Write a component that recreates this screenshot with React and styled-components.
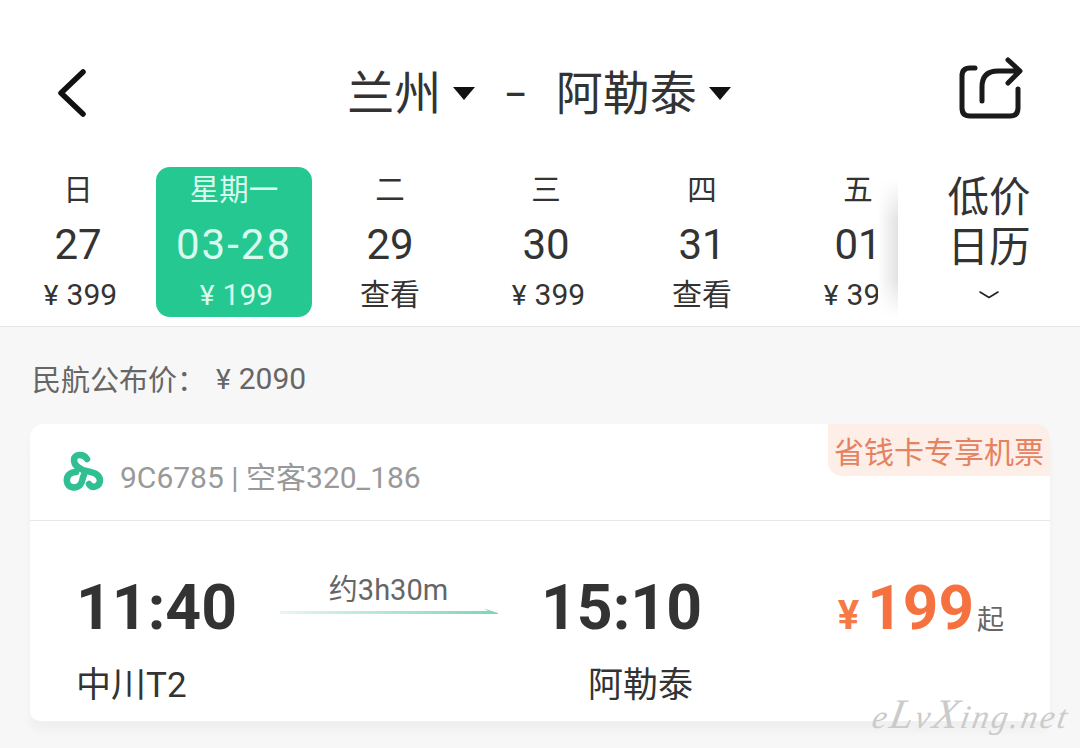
import React from 'react'
import styled, { createGlobalStyle } from 'styled-components'

const days = [
  { week: '日', date: '27', price: '399' },
  { week: '星期一', date: '03-28', price: '199', active: true },
  { week: '二', date: '29' },
  { week: '三', date: '30', price: '399' },
  { week: '四', date: '31' },
  { week: '五', date: '01', price: '399' },
]

export default function App() {
  return (
    <Page>
      <GlobalStyle />
      <Header>
        <TopBar>
          <IconButton>
            <svg width="34" height="50" viewBox="0 0 34 50" fill="none">
              <path d="M28 3 L6 24 L28 45" stroke="#111" strokeWidth="5.5" strokeLinecap="round" strokeLinejoin="round" />
            </svg>
          </IconButton>
          <Route>
            <City>兰州</City>
            <Caret />
            <Dash>–</Dash>
            <City>阿勒泰</City>
            <Caret />
          </Route>
          <ShareButton>
            <svg width="66" height="66" viewBox="0 0 66 66" fill="none">
              <path
                d="M18 12 H13 Q5 12 5 20 V52 Q5 60 13 60 H53 Q61 60 61 52 V33"
                stroke="#1a1a1a"
                strokeWidth="5"
                strokeLinecap="round"
              />
              <path
                d="M25 45 V31 Q25 15 41 15 H62 M51 4 L63 15 L51 27"
                stroke="#1a1a1a"
                strokeWidth="5"
                strokeLinecap="round"
                strokeLinejoin="round"
              />
            </svg>
          </ShareButton>
        </TopBar>
        <DateRow>
          <DateStrip>
            {days.map(day => (
              <DateCell key={day.date} $active={day.active}>
                <WeekLabel>{day.week}</WeekLabel>
                <DateNumber $active={day.active}>{day.date}</DateNumber>
                <DatePrice>
                  {day.price ? (
                    <>
                      <Yen>¥</Yen>
                      {day.price}
                    </>
                  ) : (
                    '查看'
                  )}
                </DatePrice>
              </DateCell>
            ))}
          </DateStrip>
          <StripFade />
          <CalendarLink>
            <CalendarText>
              低价
              <br />
              日历
            </CalendarText>
            <svg width="22" height="10" viewBox="0 0 22 10" fill="none">
              <path d="M2 2 L11 7.5 L20 2" stroke="#222" strokeWidth="1.6" strokeLinecap="round" strokeLinejoin="round" />
            </svg>
          </CalendarLink>
        </DateRow>
      </Header>
      <Content>
        <PublishedPrice>
          民航公布价：
          <PublishedValue>
            <Yen>¥</Yen>2090
          </PublishedValue>
        </PublishedPrice>
        <Card>
          <Badge>省钱卡专享机票</Badge>
          <CardHeader>
            <svg width="44" height="42" viewBox="0 0 44 42" fill="none" stroke="#2fbf93" strokeWidth="6.5" strokeLinecap="round">
              <path d="M25 8 C21 2 12 3 12 9 C12 15 17 17 21 19 C27 21 37 21 38 29 C38 36 30 38 27 33" />
              <path d="M14 21 C8 21 4 25 5 31 C6 37 14 38 18 34 C21 31 20 27 22 24" />
            </svg>
            <FlightInfo>9C6785 | 空客320_186</FlightInfo>
          </CardHeader>
          <CardBody>
            <Time>11:40</Time>
            <Duration>
              <DurationText>约3h30m</DurationText>
              <svg width="218" height="8" viewBox="0 0 218 8">
                <defs>
                  <linearGradient id="durationLine" x1="0" x2="1" y1="0" y2="0">
                    <stop offset="0" stopColor="#e6f6f0" />
                    <stop offset="1" stopColor="#7cd5b5" />
                  </linearGradient>
                </defs>
                <path d="M0 3 H208 L204 0.5 L218 5 V6 H0 Z" fill="url(#durationLine)" />
              </svg>
            </Duration>
            <Time $indent={44}>15:10</Time>
            <Price>
              <PriceYen>¥</PriceYen>
              <PriceValue>199</PriceValue>
              <PriceSuffix>起</PriceSuffix>
            </Price>
            <Airport>中川T2</Airport>
            <span />
            <Airport $indent={91}>阿勒泰</Airport>
          </CardBody>
        </Card>
      </Content>
      <Watermark>
        e<WatermarkCap>L</WatermarkCap>v<WatermarkCap>X</WatermarkCap>ing.net
      </Watermark>
    </Page>
  )
}

const GlobalStyle = createGlobalStyle`
  html, body {
    margin: 0;
    padding: 0;
    background: #f7f7f7;
  }
  * {
    box-sizing: border-box;
  }
`

const Page = styled.div`
  position: relative;
  width: 1080px;
  height: 748px;
  overflow: hidden;
  font-family: Roboto, "Noto Sans CJK SC", sans-serif;
  color: #333;
  background: #f7f7f7;
`

const Header = styled.header`
  height: 327px;
  background: #fff;
  border-bottom: 1px solid #e6e6e6;
`

const TopBar = styled.div`
  display: grid;
  grid-template-columns: 1fr auto 1fr;
  align-items: center;
  height: 167px;
  padding: 20px 57px 0 55px;
`

const IconButton = styled.div`
  display: flex;
  align-items: center;
`

const ShareButton = styled(IconButton)`
  justify-content: flex-end;
  margin-top: -10px;
`

const Route = styled.div`
  display: flex;
  align-items: center;
`

const City = styled.span`
  font-size: 47px;
  line-height: 60px;
  color: #333;
`

const Caret = styled.span`
  width: 0;
  height: 0;
  margin-left: 12px;
  border-left: 11px solid transparent;
  border-right: 11px solid transparent;
  border-top: 13px solid #111;
`

const Dash = styled.span`
  margin: 4px 29px 0;
  font-size: 35px;
  font-weight: 500;
  line-height: 60px;
  color: #333;
`

const DateRow = styled.div`
  display: flex;
  height: 150px;
`

const DateStrip = styled.div`
  display: flex;
  flex: none;
  width: 878px;
  overflow: hidden;
`

const DateCell = styled.div`
  display: flex;
  flex: none;
  flex-direction: column;
  align-items: center;
  width: 156px;
  height: 150px;
  border-radius: 14px;
  background: ${p => (p.$active ? '#25c891' : 'transparent')};
  color: ${p => (p.$active ? '#d9fbee' : '#333')};
`

const WeekLabel = styled.div`
  font-size: 29.5px;
  line-height: 46px;
`

const DateNumber = styled.div`
  font-size: 42px;
  line-height: 64px;
  letter-spacing: ${p => (p.$active ? '2px' : '0')};
`

const DatePrice = styled.div`
  font-size: 30px;
  line-height: 36px;
`

const Yen = styled.span`
  margin: 0 8px 0 5px;
  font-size: 28px;
`

const StripFade = styled.div`
  flex: none;
  width: 20px;
  background: linear-gradient(to right, #fff, #e2e2e2);
  mask-image: linear-gradient(to bottom, transparent 8%, #000 35%, #000 75%, transparent 100%);
`

const CalendarLink = styled.div`
  display: flex;
  flex: 1;
  flex-direction: column;
  align-items: center;
  padding-top: 6px;
  background: #fff;
`

const CalendarText = styled.div`
  margin-bottom: 17px;
  font-size: 41.5px;
  line-height: 50px;
  text-align: center;
  color: #333;
`

const Content = styled.main`
  padding: 0 30px;
`

const PublishedPrice = styled.div`
  display: flex;
  align-items: center;
  height: 97px;
  padding: 5px 2px 0;
  font-size: 29px;
  color: #666;
`

const PublishedValue = styled.span`
  margin-left: 5px;
  font-size: 30px;
`

const Card = styled.section`
  position: relative;
  height: 297px;
  border-radius: 14px 14px 10px 10px;
  background: #fff;
  box-shadow: 0 10px 10px rgba(0, 0, 0, 0.03);
`

const Badge = styled.div`
  position: absolute;
  top: 0;
  right: 0;
  width: 222px;
  height: 52px;
  padding-left: 6px;
  border-radius: 0 14px 0 14px;
  background: #fdeee8;
  font-size: 30px;
  line-height: 58px;
  white-space: nowrap;
  color: #e5825f;
`

const CardHeader = styled.div`
  display: flex;
  align-items: center;
  gap: 14px;
  height: 97px;
  padding-left: 32px;
  border-bottom: 1px solid #e8e8e8;
`

const FlightInfo = styled.span`
  margin-top: 6px;
  font-size: 30px;
  color: #999;
`

const CardBody = styled.div`
  display: grid;
  grid-template-columns: 204px 217px 248px 1fr;
  grid-template-rows: 72px 50px;
  row-gap: 17px;
  align-items: center;
  padding: 51px 46px 0;
`

const Time = styled.div`
  padding-left: ${p => p.$indent || 0}px;
  font-size: 62.5px;
  font-weight: 700;
  line-height: 72px;
  color: #333;
`

const Duration = styled.div`
  display: flex;
  flex-direction: column;
  align-self: start;
  align-items: center;
`

const DurationText = styled.span`
  font-size: 29px;
  line-height: 36px;
  color: #666;
`

const Price = styled.div`
  display: flex;
  align-items: baseline;
  justify-content: flex-end;
`

const PriceYen = styled.span`
  margin-right: 8px;
  font-size: 40px;
  font-weight: 700;
  color: #f57a45;
`

const PriceValue = styled.span`
  font-size: 62px;
  font-weight: 700;
  line-height: 72px;
  color: #f57240;
`

const PriceSuffix = styled.span`
  margin-left: 3px;
  font-size: 27px;
  color: #666;
`

const Airport = styled.div`
  padding-left: ${p => p.$indent || 0}px;
  font-size: 35px;
  line-height: 50px;
  color: #333;
`

const Watermark = styled.div`
  position: absolute;
  right: 10px;
  bottom: 11px;
  font-family: "Liberation Serif", serif;
  font-size: 33px;
  font-style: italic;
  letter-spacing: 2.5px;
  line-height: 40px;
  color: #cbcbcb;
  transform: skewX(-10deg);
`

const WatermarkCap = styled.span`
  font-size: 42px;
`
